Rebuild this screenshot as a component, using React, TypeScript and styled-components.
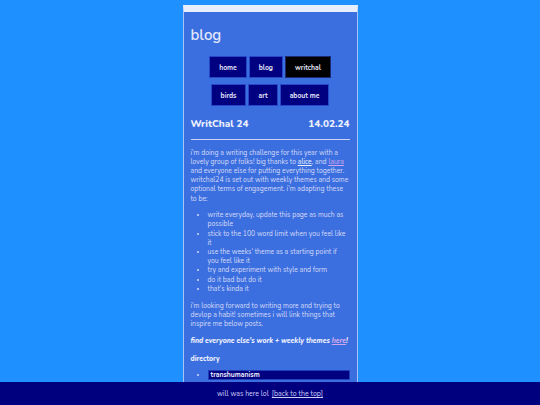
import React from "react";
import styled, { createGlobalStyle } from "styled-components";

const Global = createGlobalStyle`
  html, body {
    margin: 0;
    padding: 0;
    background: #1e90ff;
  }
  body {
    font-family: "Nunito", "Lato", "Noto Sans", sans-serif;
    color: #d6daf6;
  }
`;

const Page = styled.div`
  padding: 5px 0 40px;
`;

const Column = styled.main`
  display: block;
  width: 159px;
  margin: 0 auto;
  background: #3b6fe0;
  border: 1px solid #a9c2f4;
  border-top: 7px solid #e7eefc;
  padding: 1px 7px 0 7px;
`;

const SiteTitle = styled.h1`
  margin: 13px 0 12px;
  font-size: 15px;
  font-weight: 600;
  line-height: 18px;
  color: #e4e8fb;
`;

const Nav = styled.nav`
  display: flex;
  flex-direction: column;
  align-items: center;
  gap: 6px;
`;

const NavRow = styled.div`
  display: flex;
  justify-content: center;
  gap: 2px;
`;

const NavButton = styled.a<{ $active?: boolean }>`
  display: flex;
  align-items: center;
  justify-content: center;
  height: 20px;
  padding: 0 9px;
  background: ${(p) => (p.$active ? "#000000" : "#000080")};
  border: 1px solid ${(p) => (p.$active ? "#1a2a70" : "#2448c8")};
  color: #e6e6fa;
  font-size: 6.8px;
  font-weight: 700;
  text-decoration: none;
`;

const PostHeader = styled.div`
  display: flex;
  justify-content: space-between;
  align-items: baseline;
  margin: 12px 0 9px;
  font-size: 10px;
  font-weight: 800;
  line-height: 12px;
  color: #edf0fd;
`;

const Rule = styled.hr`
  margin: 0;
  border: 0;
  border-top: 1px solid #c9d3f6;
`;

const textBase = `
  font-size: 6.85px;
  line-height: 9.2px;
`;

const Para = styled.p<{ $strong?: boolean }>`
  margin: 7.5px 0;
  ${textBase}
  font-weight: ${(p) => (p.$strong ? 800 : 400)};
  font-style: ${(p) => (p.$strong ? "italic" : "normal")};
  color: ${(p) => (p.$strong ? "#eef0fd" : "#d6daf6")};
`;

const Label = styled.h4`
  margin: 9px 0 7px;
  ${textBase}
  font-weight: 800;
  color: #eef0fd;
`;

const Link = styled.a<{ $tone?: "light" | "visited" }>`
  color: ${(p) => (p.$tone === "visited" ? "#d2a6ec" : "#eef0ff")};
  text-decoration: underline;
`;

const List = styled.ul`
  margin: 7.5px 0;
  padding-left: 17px;
  ${textBase}
`;

const Item = styled.li``;

const DirList = styled.ul`
  margin: 0;
  padding: 0 0 10px 17px;
  ${textBase}
  display: flex;
  flex-direction: column;
  gap: 4px;
`;

const DirItem = styled.li`
  &::marker {
    color: #d6daf6;
  }
`;

const DirLink = styled.a`
  display: block;
  background: #000080;
  border: 1px solid #1f3fb8;
  padding: 0 2px;
  line-height: 7.5px;
  color: #f2f2ff;
  font-weight: 700;
  text-decoration: none;
`;

const Footer = styled.footer`
  position: fixed;
  left: 0;
  right: 0;
  bottom: 0;
  height: 23px;
  background: #00007f;
  display: flex;
  align-items: center;
  justify-content: center;
  font-size: 7px;
  color: #cfcff5;
`;

const FootLink = styled.a`
  color: #cfcff5;
  text-decoration: underline;
  margin-left: 3px;
`;

const navTop = ["home", "blog", "writchal"];
const navBottom = ["birds", "art", "about me"];
const rules = [
  "write everyday, update this page as much as possible",
  "stick to the 100 word limit when you feel like it",
  "use the weeks' theme as a starting point if you feel like it",
  "try and experiment with style and form",
  "do it bad but do it",
  "that's kinda it",
];
const directory = ["transhumanism", "grief", "untitled", "fortune"];

export default function App() {
  return (
    <Page id="top">
      <Global />
      <Column>
        <SiteTitle>blog</SiteTitle>
        <Nav>
          <NavRow>
            {navTop.map((n) => (
              <NavButton key={n} href="#" $active={n === "writchal"}>
                {n}
              </NavButton>
            ))}
          </NavRow>
          <NavRow>
            {navBottom.map((n) => (
              <NavButton key={n} href="#">
                {n}
              </NavButton>
            ))}
          </NavRow>
        </Nav>
        <PostHeader>
          <span>WritChal 24</span>
          <span>14.02.24</span>
        </PostHeader>
        <Rule />
        <Para>
          i'm doing a writing challenge for this year with a lovely group of folks! big thanks to{" "}
          <Link href="#" $tone="light">alice</Link>, and <Link href="#" $tone="visited">laura</Link>{" "}
          and everyone else for putting everything together. writchal24 is set out with weekly
          themes and some optional terms of engagement. i'm adapting these to be:
        </Para>
        <List>
          {rules.map((r) => (
            <Item key={r}>{r}</Item>
          ))}
        </List>
        <Para>
          i'm looking forward to writing more and trying to devlop a habit! sometimes i will link
          things that inspire me below posts.
        </Para>
        <Para $strong>
          find everyone else's work + weekly themes <Link href="#" $tone="visited">here</Link>!
        </Para>
        <Label>directory</Label>
        <DirList>
          {directory.map((d) => (
            <DirItem key={d}>
              <DirLink href="#">{d}</DirLink>
            </DirItem>
          ))}
        </DirList>
      </Column>
      <Footer>
        will was here lol<FootLink href="#top">[back to the top]</FootLink>
      </Footer>
    </Page>
  );
}
